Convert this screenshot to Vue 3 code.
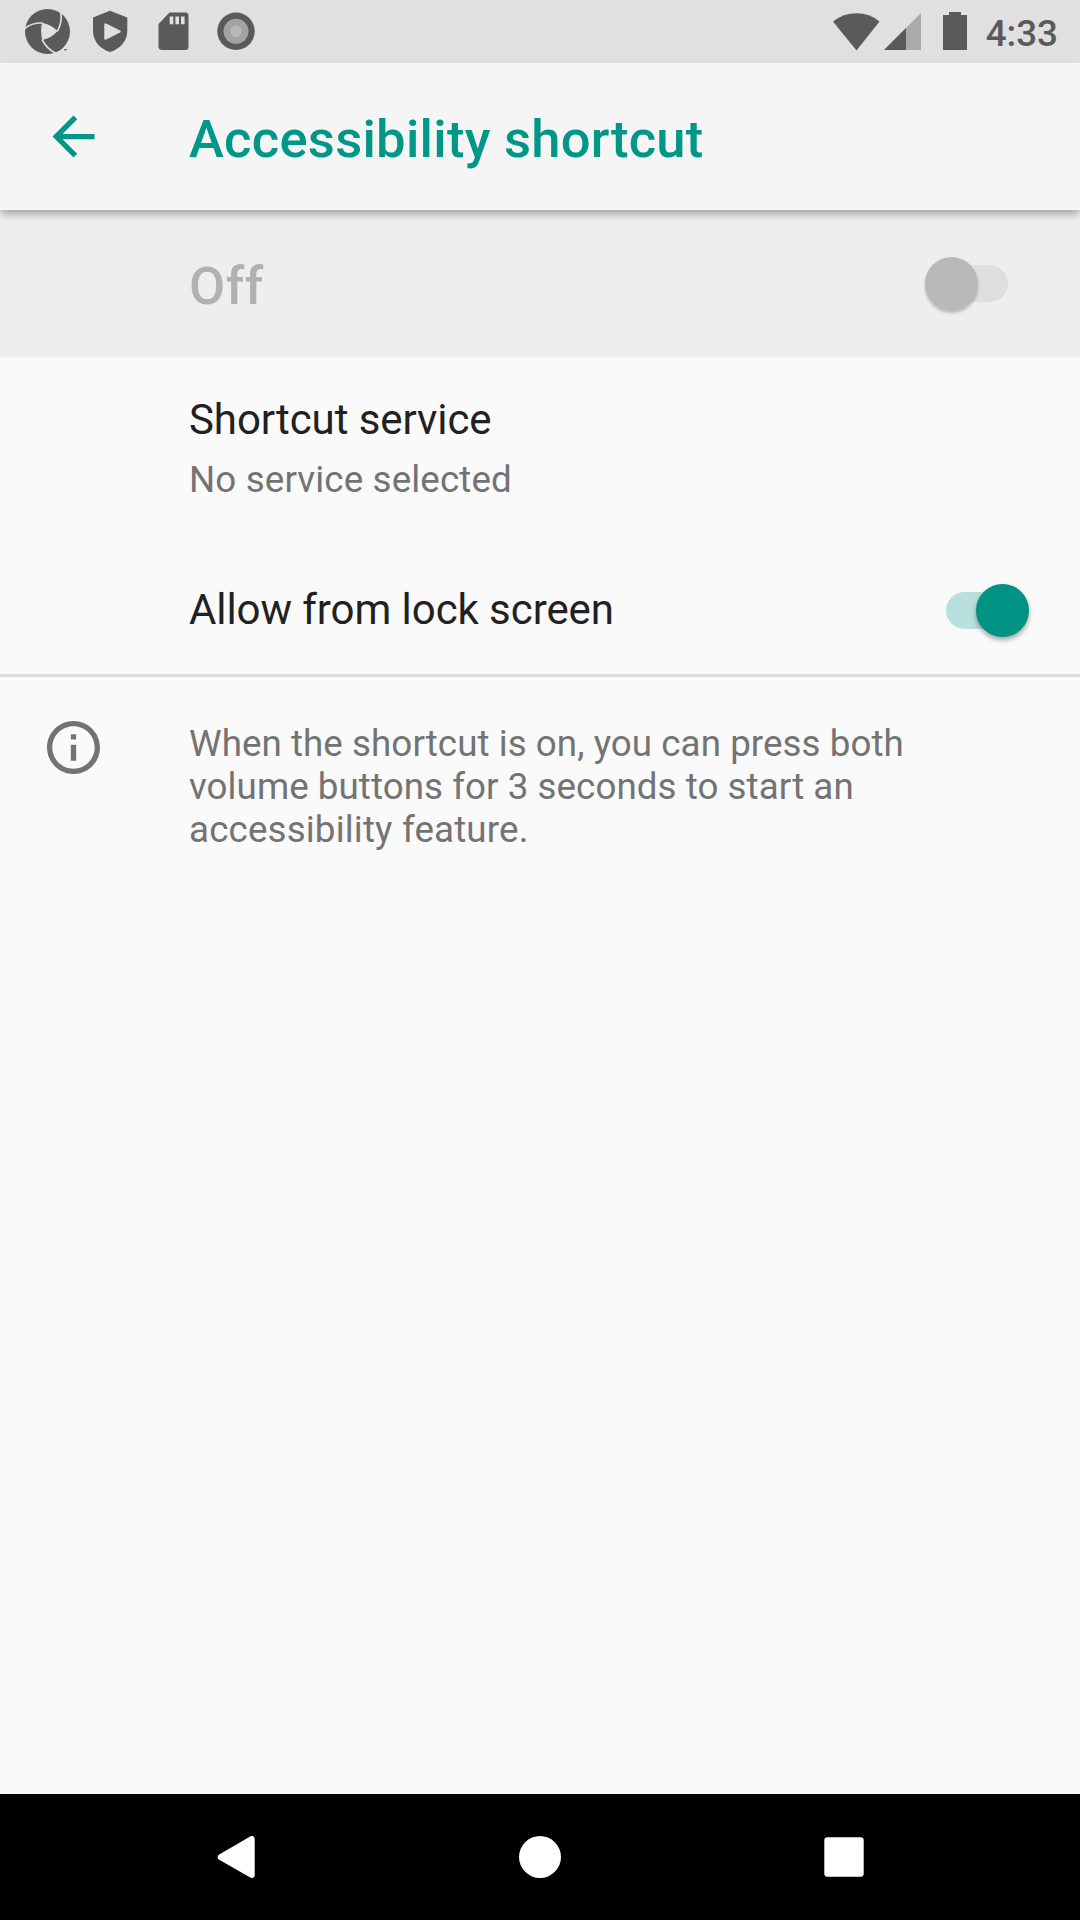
<script setup>
const infoLines = [
  'When the shortcut is on, you can press both',
  'volume buttons for 3 seconds to start an',
  'accessibility feature.',
]
</script>

<template>
  <div class="screen">
    <header class="status">
      <div class="status-left">
        <svg class="aperture" width="48" height="48" viewBox="72 24 144 144">
          <circle cx="142.500" cy="94.500" r="67.500" fill="#5a5a5a" />
          <path d="M126 68Q154 74 173 93Q154 115 127 120Q120 94 126 68Z" fill="#e0e0e0" />
          <g fill="none" stroke="#e0e0e0" stroke-width="5">
            <path d="M182 36Q188 65 172 94" />
            <path d="M74 86Q94 68 128 69" />
            <path d="M126 118Q138 144 167 160" />
          </g>
          <path d="M182 151L196 138L200 170L170 164Z" fill="#e0e0e0" />
          <path d="M192 149H201" stroke="#777" stroke-width="4" />
        </svg>
        <svg class="shield" width="36" height="42" viewBox="0 0 36 42">
          <path d="M18 .7L35.300 7.500V21C35.300 31 28 39 18 42C8 39 1 31 1 21V7.500Z" fill="#5a5a5a" />
          <path d="M13.500 14.500L27.500 21.500L13.500 28.500Z" fill="#e0e0e0" stroke="#e0e0e0" stroke-width="2.500" stroke-linejoin="round" />
        </svg>
        <svg class="sd" width="31" height="39" viewBox="0 0 31 39">
          <path d="M11.500.5H27.500Q30.500.5 30.500 4V34.500Q30.500 38 27 38H4Q.5 38 .5 34.500V12Z" fill="#5a5a5a" />
          <path d="M11.700 4.500h3.600v7.700h-3.600zM17.400 4.500h3.600v7.700h-3.600zM23 4.500h3.600v7.700H23z" fill="#e0e0e0" />
        </svg>
        <svg class="record" width="38" height="38" viewBox="0 0 38 38">
          <circle cx="19" cy="19.300" r="18.700" fill="#5a5a5a" />
          <circle cx="19" cy="19.300" r="12.500" fill="#a2a2a2" />
          <circle cx="19" cy="19.300" r="5.700" fill="#b8b8b8" />
        </svg>
      </div>
      <div class="status-right">
        <svg class="wifi" width="47" height="38" viewBox="0 0 47 38">
          <path d="M0 8.500Q10.500 .3 23.500 .3T46.500 8.500L23.500 37.500Z" fill="#5a5a5a" />
        </svg>
        <svg class="signal" width="37" height="37" viewBox="0 0 37 37">
          <path d="M37 0V37H0Z" fill="#aaa" />
          <path d="M22 15V37H0Z" fill="#5a5a5a" />
        </svg>
        <svg class="battery" width="24" height="38" viewBox="0 0 24 38">
          <path d="M6 0H18V3H24V38H0V3H6Z" fill="#5a5a5a" />
        </svg>
        <span class="clock">4:33</span>
      </div>
    </header>

    <div class="toolbar">
      <svg class="back" width="63" height="63" viewBox="0 0 24 24">
        <path d="M20 11H7.830l5.590-5.590L12 4l-8 8 8 8 1.410-1.410L7.830 13H20v-2z" fill="#009688" />
      </svg>
      <h1>Accessibility shortcut</h1>
    </div>

    <section class="switch-bar">
      <span class="switch-label">Off</span>
      <span class="toggle off"><i></i></span>
    </section>

    <section class="row service">
      <div class="title">Shortcut service</div>
      <div class="summary">No service selected</div>
    </section>

    <section class="row lock">
      <div class="title">Allow from lock screen</div>
      <span class="toggle on"><i></i></span>
    </section>

    <section class="info">
      <svg class="info-icon" width="53" height="53" viewBox="2 2 20 20">
        <path d="M11 17h2v-6h-2v6zm1-15C6.480 2 2 6.480 2 12s4.480 10 10 10 10-4.480 10-10S17.520 2 12 2zm0 18c-4.410 0-8-3.590-8-8s3.590-8 8-8 8 3.590 8 8-3.590 8-8 8zM11 9h2V7h-2v2z" fill="#737373" />
      </svg>
      <div class="info-text">
        <div v-for="line in infoLines" :key="line">{{ line }}</div>
      </div>
    </section>

    <nav class="navbar">
      <svg width="38" height="42" viewBox="0 0 38 42">
        <path d="M34.700 3V39L3.700 21.200Z" fill="#fff" stroke="#fff" stroke-width="6" stroke-linejoin="round" />
      </svg>
      <svg width="42" height="42" viewBox="0 0 42 42">
        <circle cx="21" cy="21" r="21" fill="#fff" />
      </svg>
      <svg width="40" height="40" viewBox="0 0 40 40">
        <rect x=".3" y=".3" width="39.400" height="39.400" rx="3" fill="#fff" />
      </svg>
    </nav>
  </div>
</template>

<style>
body {
  margin: 0;
}
</style>

<style scoped>
.screen {
  width: 1080px;
  height: 1920px;
  display: flex;
  flex-direction: column;
  background: #fafafa;
  font-family: Roboto, sans-serif;
  overflow: hidden;
}
svg {
  display: block;
  flex: none;
}
.status {
  height: 63px;
  flex: none;
  display: flex;
  justify-content: space-between;
  background: #e0e0e0;
}
.status-left,
.status-right {
  display: flex;
  align-items: flex-start;
}
.aperture { margin: 8px 0 0 24px; }
.shield { margin: 10px 0 0 20px; }
.sd { margin: 12px 0 0 30px; }
.record { margin: 12px 0 0 28px; }
.wifi { margin-top: 13px; }
.signal { margin: 13px 0 0 4px; }
.battery { margin: 12px 0 0 22px; }
.clock {
  margin: 0 22px 0 19px;
  padding-top: 2px;
  line-height: 63px;
  font-size: 36.75px;
  font-weight: 500;
  color: #5a5a5a;
}
.toolbar {
  height: 147px;
  flex: none;
  display: flex;
  align-items: center;
  background: #f5f5f5;
  position: relative;
  z-index: 1;
  box-shadow: 0 5px 8px -1px rgba(0, 0, 0, 0.32);
}
.back {
  margin: 0 84px 0 42px;
}
h1 {
  margin: 0;
  padding-top: 4px;
  font-size: 52.5px;
  line-height: 62px;
  font-weight: 500;
  letter-spacing: 0.28px;
  color: #009688;
}
.switch-bar {
  height: 147px;
  box-sizing: border-box;
  flex: none;
  display: flex;
  align-items: center;
  justify-content: space-between;
  padding: 0 72px 0 189px;
  background: #eeeeee;
}
.switch-label {
  padding-top: 4px;
  font-size: 52.5px;
  line-height: 62px;
  font-weight: 500;
  letter-spacing: 0.5px;
  color: #b1b1b1;
}
.toggle {
  display: flex;
  align-items: center;
  width: 70px;
  height: 37px;
  border-radius: 19px;
}
.toggle i {
  flex: none;
  width: 53px;
  height: 53px;
  border-radius: 50%;
}
.toggle.off {
  background: #dedede;
}
.toggle.off i {
  margin-left: -13px;
  background: #b9b9b9;
  box-shadow: 0 3px 3px rgba(0, 0, 0, 0.22);
}
.toggle.on {
  background: #b8e1dd;
}
.toggle.on i {
  margin-left: 30px;
  background: #009384;
  box-shadow: 0 3px 5px rgba(0, 0, 0, 0.35);
}
.row {
  flex: none;
  box-sizing: border-box;
  padding-left: 189px;
}
.title {
  font-size: 42px;
  line-height: 50px;
  letter-spacing: -0.07px;
  color: #212121;
}
.service {
  height: 189px;
  padding-top: 38px;
}
.summary {
  margin-top: 13px;
  font-size: 36.75px;
  line-height: 43px;
  letter-spacing: 0.13px;
  color: #737373;
}
.lock {
  height: 131px;
  display: flex;
  align-items: center;
  justify-content: space-between;
  padding-right: 64px;
  border-bottom: 3px solid #dcdcdc;
}
.info {
  flex: 1;
  display: flex;
  align-items: flex-start;
  padding: 44px 0 0 47px;
}
.info-icon {
  margin-right: 89px;
}
.info-text {
  padding-top: 1px;
  font-size: 36.75px;
  line-height: 43px;
  letter-spacing: 0.05px;
  color: #737373;
  white-space: nowrap;
}
.info-text div:last-child {
  letter-spacing: 0.15px;
}
.navbar {
  height: 126px;
  box-sizing: border-box;
  flex: none;
  display: flex;
  align-items: center;
  justify-content: space-between;
  padding: 0 216px 0 217px;
  background: #000;
}
</style>
